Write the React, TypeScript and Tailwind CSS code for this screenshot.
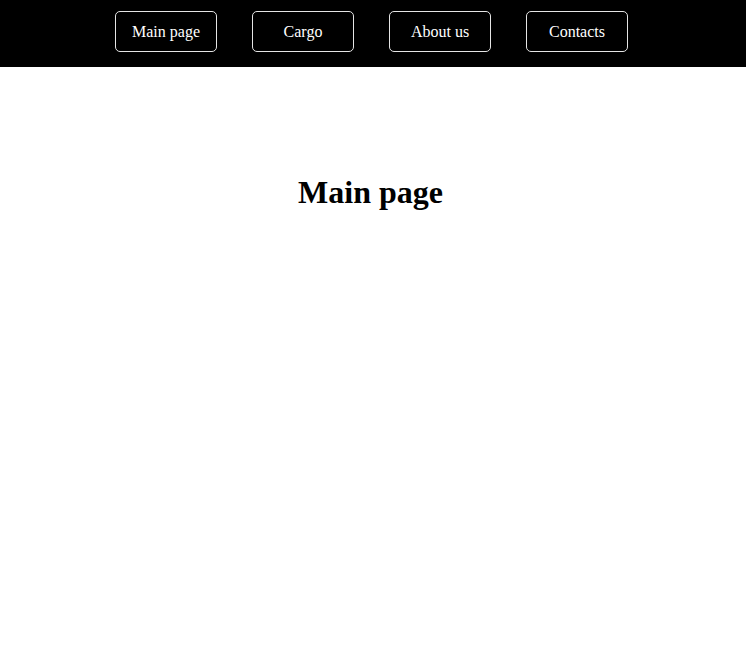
const links = ["Main page", "Cargo", "About us", "Contacts"];

export default function App() {
    return (
        <div className="min-h-screen bg-white font-['Liberation_Serif',serif]">
            <nav className="flex h-[67px] items-start justify-center gap-[35px] bg-black pt-[11px] pr-[3px]">
                {links.map((l) => (
                    <a
                        key={l}
                        href="#"
                        className="flex h-[41px] w-[102px] items-center justify-center rounded-[5px] border border-[#e5e5e5] text-base text-white"
                    >
                        {l}
                    </a>
                ))}
            </nav>
            <h1 className="mt-[101px] pr-[5px] text-center text-[32px] font-bold text-black">Main page</h1>
        </div>
    );
}
